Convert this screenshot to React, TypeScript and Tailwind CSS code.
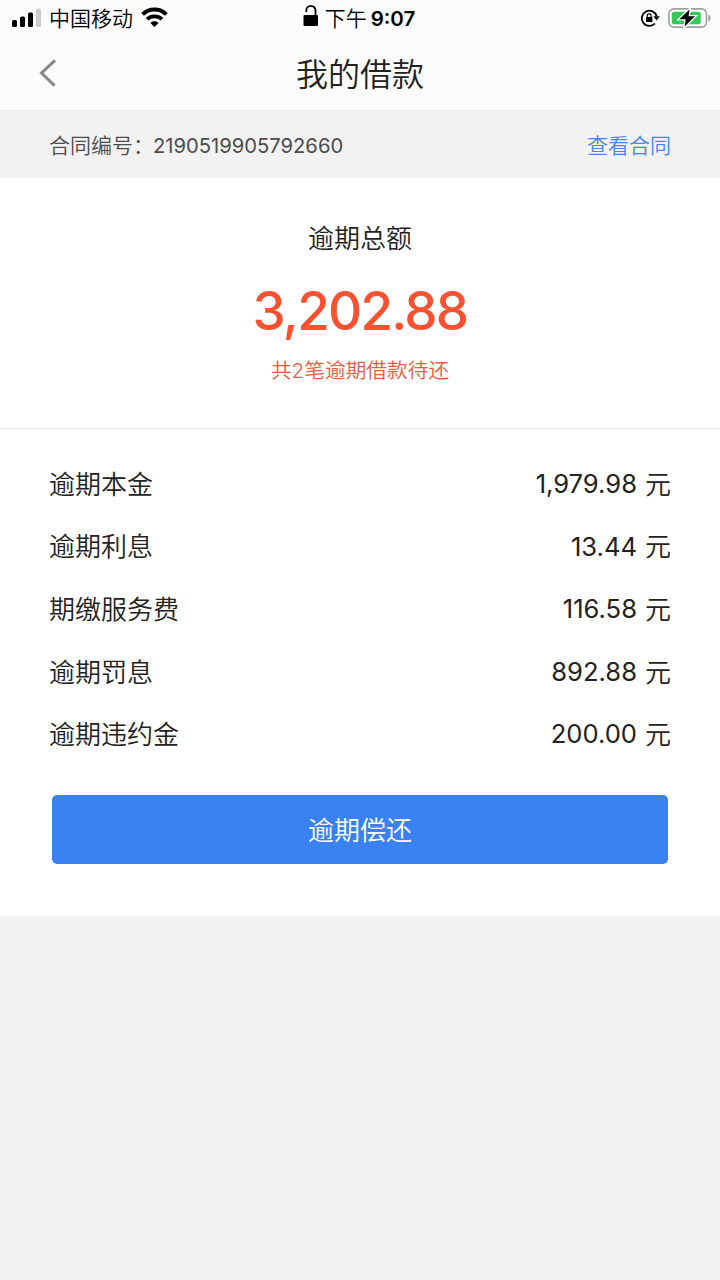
import React from "react";

type FeeItem = {
  label: string;
  amount: string;
};

const FEE_ITEMS: FeeItem[] = [
  { label: "逾期本金", amount: "1,979.98" },
  { label: "逾期利息", amount: "13.44" },
  { label: "期缴服务费", amount: "116.58" },
  { label: "逾期罚息", amount: "892.88" },
  { label: "逾期违约金", amount: "200.00" },
];

const StatusBar: React.FC = () => {
  return (
    <div className="grid h-9 grid-cols-3 items-center text-black">
      <div className="flex items-center pl-3">
        <svg width="30" height="20" viewBox="0 0 30 20">
          <rect x="0" y="12" width="5" height="7" rx="1.5" />
          <rect x="8" y="8.5" width="5" height="10.5" rx="1.5" />
          <rect x="16" y="4.5" width="5" height="14.5" rx="1.5" />
          <rect x="24" y="0.5" width="5" height="18.5" rx="1.5" fill="#cccccc" />
        </svg>
        <span className="ml-[7px] pt-0.5 text-[21px] leading-[34px]">中国移动</span>
        <svg className="ml-2 mb-0.5" width="27" height="20" viewBox="0 0 27 20">
          <g fill="none" stroke="#000" strokeWidth="3.8">
            <path d="M1.6 7.3C8.2 .9 18.8 .9 25.4 7.3" />
            <path d="M6 12.2C10.3 8.3 16.7 8.3 21 12.2" />
          </g>
          <path d="M9.4 16C11.7 13.8 15.3 13.8 17.6 16L13.5 20Z" />
        </svg>
      </div>
      <div className="flex items-center justify-center">
        <svg className="-ml-0.5 mb-1" width="16" height="22" viewBox="0 0 16 22">
          <rect x="0.5" y="10" width="14.5" height="11" rx="1" />
          <path d="M3.3 7V5.5A4.6 4.6 0 0 1 12.5 5.5V11" fill="none" stroke="#000" strokeWidth="1.8" />
        </svg>
        <span className="ml-1.5 pt-0.5 text-[21px] leading-[34px]">下午</span>
        <span className="ml-1 pt-0.5 text-[20.5px] font-semibold leading-[34px]">9:07</span>
      </div>
      <div className="flex items-center justify-end pr-2">
        <svg width="20" height="20" viewBox="0 0 20 20">
          <path d="M14.9 15.5A7.6 7.6 0 1 1 16.7 8.2" fill="none" stroke="#000" strokeWidth="1.8" />
          <path d="M13.4 8.2H19.8L16.6 12.4Z" />
          <rect x="6" y="9" width="6.4" height="5" rx="0.6" />
          <path d="M7.3 9.5V7.8A1.9 1.9 0 0 1 11.1 7.8V9.5" fill="none" stroke="#000" strokeWidth="1.2" />
        </svg>
        <svg className="ml-2" width="44" height="22" viewBox="0 0 44 22">
          <rect x="0.9" y="1.9" width="37.6" height="18.2" rx="5" fill="none" stroke="#a0a0a0" strokeWidth="1.6" />
          <path d="M40.3 7.5C43.4 8.8 43.4 13.2 40.3 14.5Z" fill="#a0a0a0" />
          <rect x="3.8" y="4.7" width="29" height="12.6" rx="2.6" fill="#34c759" />
          <path d="M21.5 2.5L11.3 12.3H17.6L16.7 19.5L27 9.3H20.6Z" stroke="#fcfcfc" strokeWidth="2.6" />
          <path d="M21.5 2.5L11.3 12.3H17.6L16.7 19.5L27 9.3H20.6Z" />
        </svg>
      </div>
    </div>
  );
};

const App: React.FC = () => {
  return (
    <div className="min-h-screen w-full bg-[#f2f2f2] font-[Inter,'Noto_Sans_CJK_SC',sans-serif] font-[350] text-[#222222]">
      <header className="h-[111px] border-b border-[#ececec] bg-[#fcfcfc]">
        <StatusBar />
        <div className="grid h-[74px] grid-cols-[100px_1fr_100px] items-center">
          <button className="pl-[39px]" aria-label="返回">
            <svg width="18" height="28" viewBox="0 0 18 28" fill="none">
              <path d="M16 1.3L2.5 14L15.6 26.7" stroke="#888888" strokeWidth="3" />
            </svg>
          </button>
          <h1 className="pt-[3px] text-center text-[32px] leading-[71px]">我的借款</h1>
        </div>
      </header>

      {/* 合同编号 */}
      <div className="flex h-[67px] items-center justify-between px-[49px] pt-[3px] text-[21px] text-[#4c4c4c]">
        <div className="flex items-center">
          <span>合同编号：</span>
          <span className="-ml-px text-[20.2px] font-normal">2190519905792660</span>
        </div>
        <a className="text-[#4586f3]">查看合同</a>
      </div>

      <main className="h-[738px] bg-white">
        {/* 逾期总额 */}
        <section className="flex h-[251px] flex-col items-center border-b border-[#ececec] pt-[41px]">
          <h2 className="text-[26px] leading-10">逾期总额</h2>
          <p className="mt-[19px] text-[53px] font-medium leading-[66px] tracking-[-1.8px] text-[#fa5130]">3,202.88</p>
          <p className="mt-[11px] text-[20.7px] leading-8 text-[#ea5a40]">共2笔逾期借款待还</p>
        </section>

        {/* 费用明细 */}
        <ul className="px-[49px] pt-6">
          {FEE_ITEMS.map((item) => (
            <li key={item.label} className="flex h-[62.6px] items-center justify-between text-[26px]">
              <span>{item.label}</span>
              <span className="flex items-center">
                <span className="mr-2 text-[25.6px] font-normal">{item.amount}</span>
                <span>元</span>
              </span>
            </li>
          ))}
        </ul>

        <div className="px-[52px] pt-[29px]">
          <button className="h-[69px] w-full rounded-[5px] bg-[#3a81f3] pt-0.5 text-[26px] text-white">
            逾期偿还
          </button>
        </div>
      </main>
    </div>
  );
};

export default App;
